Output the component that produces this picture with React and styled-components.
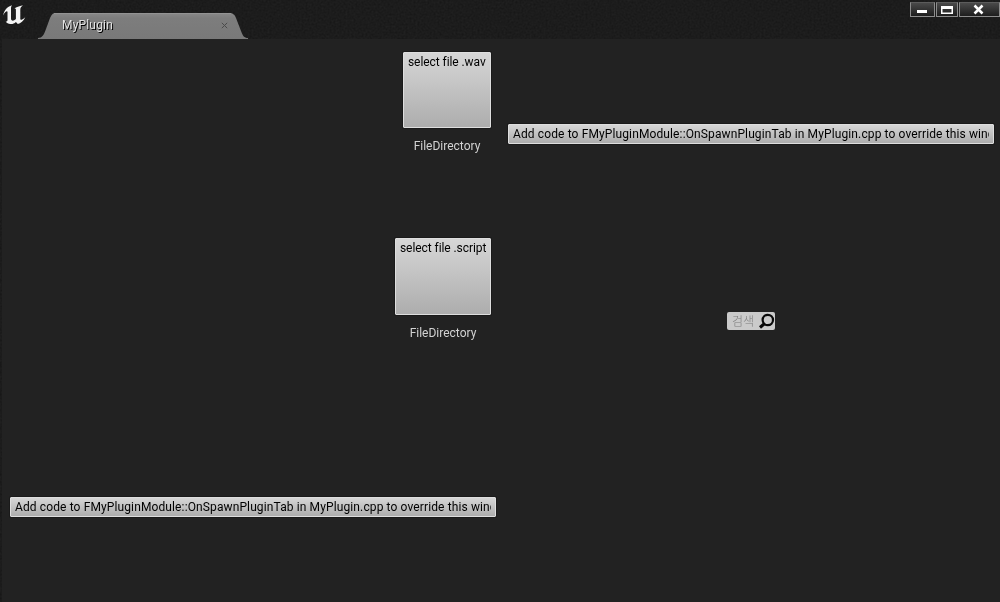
import React from 'react';
import styled, { createGlobalStyle } from 'styled-components';

const GlobalStyle = createGlobalStyle`
  * { box-sizing: border-box; }
  body { margin: 0; background: #161616; font-family: Roboto, "Noto Sans CJK KR", sans-serif; font-size: 12px; }
  button, input { font: inherit; }
`;

const Window = styled.main`
  position: relative;
  display: flex;
  flex-direction: column;
  width: 1000px;
  height: 602px;
  overflow: hidden;
  will-change: transform;
`;

const Grain = styled.svg`
  position: absolute;
  inset: 0;
  width: 100%;
  height: 100%;
  opacity: 0.08;
`;

const TitleBar = styled.header`
  position: relative;
  display: flex;
  align-items: flex-start;
  height: 39px;
  flex: none;
`;

const Logo = styled.svg`
  width: 26px;
  height: 26px;
  margin: 2px 0 0 1px;
  flex: none;
`;

const Tab = styled.div`
  position: relative;
  display: flex;
  align-items: center;
  width: 211px;
  height: 27px;
  margin: 12px 0 0 11px;
  padding: 0 20px 2px 24px;
`;

const TabShape = styled.svg`
  position: absolute;
  inset: 0;
  width: 100%;
  height: 100%;
`;

const TabTitle = styled.span`
  position: relative;
  flex: 1;
  color: #e2e2e2;
  line-height: 14px;
  letter-spacing: 0.18px;
  text-shadow: 1px 1px 0 #000;
`;

const TabClose = styled.svg`
  position: relative;
  width: 7px;
  height: 7px;
  margin: 2px 1px 0 0;
`;

const WindowControls = styled.div`
  display: flex;
  gap: 1px;
  margin: 2px 0 0 auto;
`;

const ControlButton = styled.button`
  width: ${({ $width }) => $width}px;
  height: 15px;
  padding: 0;
  border: 1px solid #8c8c8c;
  border-top-color: #5c5c5c;
  background: linear-gradient(#4a4a4a, #1d1d1d);
  svg { display: block; width: 100%; height: 100%; }
`;

const Content = styled.section`
  position: relative;
  display: grid;
  grid-template-columns: 502px 494px;
  grid-template-rows: 187px 186px 187px;
  flex: 1;
  margin-left: 2px;
  padding-top: 1px;
  background: #222;
`;

const Cell = styled.div`
  display: flex;
  justify-content: ${({ $justify }) => $justify || 'center'};
  align-items: ${({ $align }) => $align || 'center'};
  padding: ${({ $padding }) => $padding || '0'};
`;

const FilePicker = styled.div`
  display: flex;
  flex-direction: column;
  align-items: center;
`;

const SlateButton = styled.button`
  display: flex;
  width: ${({ $width }) => $width}px;
  height: ${({ $height }) => $height}px;
  padding: 2px 4px;
  border: 1px solid #dedede;
  border-radius: 1px;
  background: linear-gradient(#d6d6d6, #adadad);
  box-shadow: 0 0 0 1px #1a1a1a;
  color: #000;
  line-height: 14px;
  letter-spacing: ${({ $spacing }) => $spacing}px;
  text-align: left;
  white-space: nowrap;
`;

const ClippedText = styled.span`
  flex: 1;
  overflow: hidden;
  white-space: nowrap;
`;

const Caption = styled.span`
  margin-top: 11px;
  color: #d2d2d2;
  line-height: 14px;
`;

const SearchBox = styled.label`
  display: flex;
  align-items: center;
  justify-content: space-between;
  width: 48px;
  height: 18px;
  margin-top: 2px;
  padding: 0 0 0 5px;
  border-radius: 2px;
  background: #cacaca;
  color: #7c7c7c;
  font-weight: 300;
  line-height: 16px;
  svg { width: 17px; height: 18px; flex: none; }
`;

const SearchHint = styled.span`
  padding-top: 2px;
`;

const MESSAGE = 'Add code to FMyPluginModule::OnSpawnPluginTab in MyPlugin.cpp to override this wind';

function MessageButton() {
  return (
    <SlateButton $width={486} $height={20} $spacing={0.12}>
      <ClippedText>{MESSAGE}</ClippedText>
    </SlateButton>
  );
}

export default function App() {
  return (
    <>
      <GlobalStyle />
      <Window>
        <Grain aria-hidden="true">
          <filter id="grain">
            <feTurbulence type="fractalNoise" baseFrequency="0.5" numOctaves="2" />
            <feColorMatrix type="saturate" values="0" />
          </filter>
          <rect width="100%" height="100%" filter="url(#grain)" />
        </Grain>
        <TitleBar>
          <Logo viewBox="0 0 26 26" fill="#f4f4f4">
            <path d="M2 13.500C3 8.500 6 4.600 11 3.200C10 4.400 10 5.500 10 7V16.500C10 18 11 18.800 12 18.600C13 18.500 14.200 17.800 14.900 17V7.800C14.900 6.800 14.400 6.300 13.400 6.400C15.400 5 18 4 22 3.200C20.300 4.700 19.300 5.700 19.300 7.500V17C19.300 18.300 20.600 18.300 24.300 15.200C22.800 19 19.500 21.100 16.800 22.100L14.900 20C13.100 21.900 11.200 22.200 9.300 22C7.400 21.800 5.500 20.700 4.700 19.400C6 19.700 6.500 19 6.500 17.700V10C6.500 8.600 4.200 9.200 2 13.500Z" />
          </Logo>
          <Tab>
            <TabShape viewBox="0 0 211 27">
              <defs>
                <linearGradient id="tab" x2="0" y2="1">
                  <stop stopColor="#898989" />
                  <stop offset="0.2" stopColor="#7d7d7d" />
                  <stop offset="1" stopColor="#797979" />
                </linearGradient>
              </defs>
              <path fill="url(#tab)" d="M0 27V26C4 26 6 23 8 17L12 6C14 2 15 1 18 1H191C195 1 197 3 198 6L203 19C205 24 206 26 210 26V27Z" />
              <path fill="none" stroke="#939393" d="M16 1.500H193" />
            </TabShape>
            <TabTitle>MyPlugin</TabTitle>
            <TabClose viewBox="0 0 7 7" stroke="#4b4b4b" strokeWidth="1">
              <path d="M.8.8L6.200 6.200M6.200.8L.8 6.200" />
            </TabClose>
          </Tab>
          <WindowControls>
            <ControlButton $width={25} aria-label="Minimize">
              <svg viewBox="0 0 23 13"><path fill="#fff" d="M6 7h10v3H6z" /></svg>
            </ControlButton>
            <ControlButton $width={22} aria-label="Maximize">
              <svg viewBox="0 0 20 13"><path fill="#fff" fillRule="evenodd" d="M4 3h12v8H4zM5.500 6v3.500h9V6z" /></svg>
            </ControlButton>
            <ControlButton $width={41} aria-label="Close">
              <svg viewBox="0 0 39 13"><path stroke="#fff" strokeWidth="2.500" d="M14.500 2.500l8 8M22.500 2.500l-8 8" /></svg>
            </ControlButton>
          </WindowControls>
        </TitleBar>
        <Content>
          <Cell $justify="flex-end" $align="flex-start" $padding="12px 13px 0 0">
            <FilePicker>
              <SlateButton $width={88} $height={76} $spacing={-0.07}>select file .wav</SlateButton>
              <Caption>FileDirectory</Caption>
            </FilePicker>
          </Cell>
          <Cell><MessageButton /></Cell>
          <Cell $justify="flex-end" $align="flex-start" $padding="11px 13px 0 0">
            <FilePicker>
              <SlateButton $width={96} $height={77} $spacing={-0.07}>select file .script</SlateButton>
              <Caption>FileDirectory</Caption>
            </FilePicker>
          </Cell>
          <Cell>
            <SearchBox>
              <SearchHint>검색</SearchHint>
              <svg viewBox="0 0 17 18" fill="none" stroke="#080808">
                <circle cx="9.800" cy="8" r="5.200" strokeWidth="2.200" />
                <path d="M6 12L2 15.500" strokeWidth="3" />
              </svg>
            </SearchBox>
          </Cell>
          <Cell><MessageButton /></Cell>
        </Content>
      </Window>
    </>
  );
}
